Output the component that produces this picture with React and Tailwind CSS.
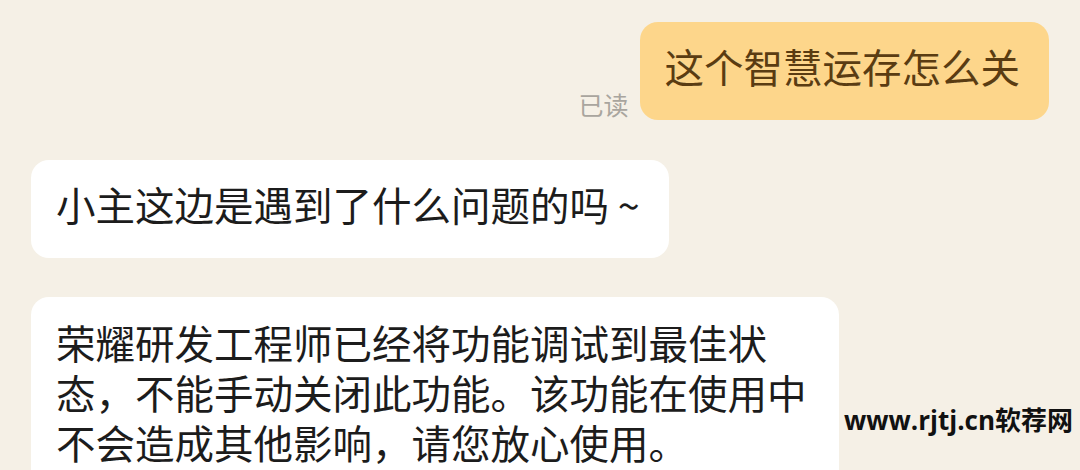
import React from "react";

const cjk = "font-['Noto_Sans_CJK_SC','Noto_Sans',sans-serif]";

function Bubble({ children, className = "" }) {
  return (
    <div
      className={`rounded-[18px] pl-[25px] pr-[29px] pt-[19px] pb-[29px] text-[39.5px] leading-[50px] ${className}`}
    >
      {children}
    </div>
  );
}

export default function App() {
  return (
    <div
      className={`w-[1080px] h-[470px] overflow-hidden bg-[#f5f0e6] flex flex-col px-[31px] ${cjk}`}
    >
      <div className="flex justify-end items-end pt-[22px]">
        <span className="text-[25px] leading-[30px] text-[#a9a59e] mr-[11px] mb-[1px]">
          已读
        </span>
        <Bubble className="bg-[#fdd68b] text-[#5a3c12]">这个智慧运存怎么关</Bubble>
      </div>

      <div className="flex mt-[40px]">
        <Bubble className="bg-white text-[#1c1c1c]">小主这边是遇到了什么问题的吗 ~</Bubble>
      </div>

      <div className="flex mt-[39px] items-start">
        <Bubble className="bg-white text-[#1c1c1c] w-[808px] shrink-0 pt-[20px]">
          荣耀研发工程师已经将功能调试到最佳状态，不能手动关闭此功能。该功能在使用中不会造成其他影响，请您放心使用。
        </Bubble>
        <div className="ml-[5px] mt-[108px] whitespace-nowrap text-[26px] leading-[30px] font-bold text-[#111] font-['Open_Sans','Noto_Sans_CJK_SC',sans-serif]">
          www.rjtj.cn软荐网
        </div>
      </div>
    </div>
  );
}
